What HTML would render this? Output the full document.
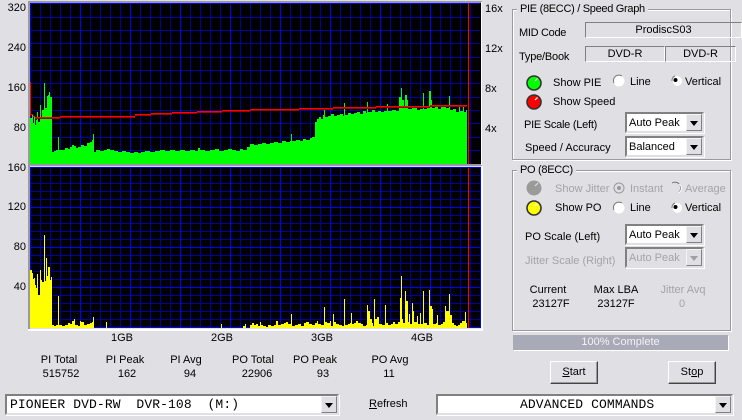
<!DOCTYPE html>
<html><head><meta charset="utf-8"><style>
html,body{margin:0;padding:0}
body{width:742px;height:420px;background:#E0DFE3;overflow:hidden;position:relative;font:11px "Liberation Sans",Arial,sans-serif;color:#000}
.t{position:absolute;white-space:nowrap;line-height:13px;height:13px;margin-top:1px}
.c{transform:translateX(-50%)}
.r{transform:translateX(-100%)}
.d{color:#a4a4a6}
.f{position:absolute;box-sizing:border-box;border:1px solid;border-color:#808080 #fff #fff #808080;text-align:center;line-height:15px}
.g{position:absolute;box-sizing:border-box;border:1px solid #9a9a9c;box-shadow:1px 1px 0 #fff,inset 1px 1px 0 #fff}
.g>span{position:absolute;left:4px;top:-7px;background:#E0DFE3;padding:0 3px;line-height:13px;white-space:nowrap;letter-spacing:-.3px}
.cb{position:absolute;box-sizing:border-box;background:#fff;border:2px solid;border-color:#808080 #E0DFE3 #E0DFE3 #808080;box-shadow:1px 1px 0 #fff;line-height:19px;padding-left:2px;white-space:nowrap}
.cb b{position:absolute;right:0;top:0;bottom:0;width:16px;box-sizing:border-box;background:#E0DFE3;border:1px solid;border-color:#f4f4f4 #808080 #808080 #f4f4f4}
.cb b:after{content:"";position:absolute;left:3px;top:6px;border:4px solid transparent;border-top:5px solid #000;border-bottom:0}
.dis{background:#E0DFE3;color:#a4a4a6}
.dis b:after{border-top-color:#a0a0a0}
.m{font:13px "Liberation Mono",monospace;padding-left:3px;line-height:17px;white-space:pre;letter-spacing:.1px}
.btn{position:absolute;box-sizing:border-box;width:48px;height:23px;background:#E0DFE3;border:1px solid;border-color:#fff #444 #444 #fff;box-shadow:inset -1px -1px 0 #9a9a9c;text-align:center;line-height:20px}
u{text-decoration:underline}
svg{position:absolute;left:0;top:0}
</style></head><body>
<svg width="742" height="420" viewBox="0 0 742 420" shape-rendering="crispEdges">
<rect x="30" y="2" width="451" height="162" fill="#000"/>
<rect x="30" y="167" width="451" height="161" fill="#000"/>
<path fill="none" stroke="#00009c" d="M40.5 3V164M50.5 3V164M60.5 3V164M70.5 3V164M90.5 3V164M100.5 3V164M110.5 3V164M120.5 3V164M140.5 3V164M150.5 3V164M160.5 3V164M170.5 3V164M190.5 3V164M200.5 3V164M210.5 3V164M220.5 3V164M240.5 3V164M250.5 3V164M260.5 3V164M270.5 3V164M290.5 3V164M300.5 3V164M310.5 3V164M320.5 3V164M340.5 3V164M350.5 3V164M360.5 3V164M370.5 3V164M390.5 3V164M400.5 3V164M410.5 3V164M420.5 3V164M440.5 3V164M450.5 3V164M460.5 3V164M470.5 3V164
M30 17.5H480M30 30.5H480M30 43.5H480M30 57.5H480M30 70.5H480M30 83.5H480M30 97.5H480M30 110.5H480M30 123.5H480M30 137.5H480M30 150.5H480
M40.5 167V328M50.5 167V328M60.5 167V328M70.5 167V328M90.5 167V328M100.5 167V328M110.5 167V328M120.5 167V328M140.5 167V328M150.5 167V328M160.5 167V328M170.5 167V328M190.5 167V328M200.5 167V328M210.5 167V328M220.5 167V328M240.5 167V328M250.5 167V328M260.5 167V328M270.5 167V328M290.5 167V328M300.5 167V328M310.5 167V328M320.5 167V328M340.5 167V328M350.5 167V328M360.5 167V328M370.5 167V328M390.5 167V328M400.5 167V328M410.5 167V328M420.5 167V328M440.5 167V328M450.5 167V328M460.5 167V328M470.5 167V328
M30 175.5H480M30 183.5H480M30 191.5H480M30 199.5H480M30 215.5H480M30 223.5H480M30 231.5H480M30 239.5H480M30 255.5H480M30 263.5H480M30 271.5H480M30 279.5H480M30 295.5H480M30 303.5H480M30 311.5H480M30 319.5H480"/>
<path fill="none" stroke="#0000ff" d="M30.5 3V164M80.5 3V164M130.5 3V164M180.5 3V164M230.5 3V164M280.5 3V164M330.5 3V164M380.5 3V164M430.5 3V164M30 3.5H480
M30.5 167V328M80.5 167V328M130.5 167V328M180.5 167V328M230.5 167V328M280.5 167V328M330.5 167V328M380.5 167V328M430.5 167V328M480.5 167V328M30 167.5H480M30 207.5H480M30 247.5H480M30 287.5H480M30 327.5H480"/>
<path fill="#00ff00" d="M30 164V118H32V115H33V123H34V116H35V125H36V120H37V112H38V122H40V105H41V118H42V110H44V83H45V108H47V96H48V95H49V92H50V97H52V152H54V151H56V150H58V137H59V150H62V150H65V148H68V149H70V147H72V145H74V146H76V148H78V147H81V145H84V146H87V143H90V142H92V140H93V134H94V152H96V150H100V151H104V150H107V149H110V150H114V151H118V152H122V151H126V152H130V153H134V152H138V153H141V152H145V151H150V152H155V151H160V150H165V151H170V150H175V151H180V150H185V151H190V150H195V151H198V148H200V150H205V151H210V150H215V149H219V151H224V150H228V149H232V150H236V151H240V149H243V150H247V147H250V144H254V145H258V144H262V143H266V144H270V143H274V142H278V143H282V141H286V142H290V141H291V134H292V141H296V140H300V141H303V139H306V140H310V138H312V137H315V122H317V119H319V117H321V119H323V115H324V109H325V117H328V116H331V114H334V116H337V115H340V114H343V116H344V103H345V115H348V113H351V114H354V113H357V112H360V114H363V111H366V113H367V102H368V112H372V110H375V112H378V111H381V112H384V111H387V104H388V111H392V110H396V111H399V97H401V88H402V100H404V107H405V95H407V100H408V109H412V108H414V107H417V110H420V109H423V93H424V109H427V107H429V91H431V100H432V108H435V106H437V105H438V109H441V107H444V105H446V108H449V96H450V110H453V109H456V112H459V105H460V111H463V106H464V112H466V110H467V164Z"/>
<path fill="#ffff00" d="M30 328V270H32V273H33V279H34V278H35V285H36V288H37V274H38V295H40V270H41V280H42V282H44V235H45V281H46V258H47V276H48V267H50V280H51V277H52V325H54V326H56V325H58V296H59V325H62V326H65V325H68V323H70V324H72V321H74V319H75V325H78V326H80V321H81V322H84V325H87V324H90V323H92V322H93V317H94V328ZM106 328V322H107V328ZM221 328V324H222V328ZM243 328V326H245V324H246V328ZM250 328V325H252V323H254V325H256V324H258V326H260V322H261V325H263V326H266V327H268V325H271V326H274V325H276V321H278V325H281V324H284V323H286V322H288V324H291V314H292V326H295V325H298V324H301V326H304V323H306V322H309V324H312V325H315V323H317V321H318V324H321V325H324V307H325V322H327V323H330V321H331V326H333V314H334V322H336V324H339V325H342V326H344V299H345V325H348V324H350V323H351V313H352V324H354V323H356V321H358V323H361V324H363V326H366V325H367V305H368V311H370V319H372V323H373V326H374V299H375V319H377V317H379V324H382V325H385V305H386V323H388V325H391V324H393V322H395V324H398V322H400V298H401V276H402V319H403V323H405V291H406V301H408V322H409V314H410V324H412V303H413V311H414V322H417V316H418V324H420V313H421V324H423V291H424V323H427V325H429V290H430V306H432V309H433V324H436V323H437V315H438V325H441V324H443V322H445V306H446V311H449V294H450V315H452V323H454V325H456V326H458V325H460V323H462V321H465V312H466V323H467V328Z"/>
<path fill="none" stroke="#a00000" d="M35 118.500H60M60 117.500H135M135 115.500H151M151 114.500H172M172 113.500H197M197 112.500H222M222 111.500H250M250 110.500H299M299 109.500H333M333 108.500H376M376 107.500H430M430 106.500H467"/>
<path fill="none" stroke="#ff0000" d="M30.5 82V116M31 114.500H33M33 116.500H35M35 117.500H60M60 116.500H135M135 114.500H151M151 113.500H172M172 112.500H197M197 111.500H222M222 110.500H250M250 109.500H299M299 108.500H333M333 107.500H376M376 106.500H430M430 105.500H467"/>
<rect x="468" y="3" width="1" height="161" fill="#ff0000"/>
<rect x="468" y="168" width="1" height="160" fill="#ff0000"/>
<rect x="28" y="1" width="454" height="2" fill="#9a9a9c"/>
<rect x="28" y="1" width="2" height="163" fill="#9a9a9c"/>
<rect x="28" y="164" width="454" height="2" fill="#9a9a9c"/>
<rect x="28" y="166" width="2" height="163" fill="#9a9a9c"/>
<rect x="481" y="2" width="1" height="163" fill="#fff"/>
<rect x="481" y="166" width="2" height="165" fill="#fff"/>
<rect x="28" y="329" width="455" height="2" fill="#fff"/>
<g shape-rendering="geometricPrecision">
<circle cx="534" cy="83" r="7" fill="#00ff00" stroke="#333" stroke-width="1.6"/><path d="M535 81l2.500-2.500" stroke="#fff" stroke-width="1.200"/>
<circle cx="534" cy="102" r="7" fill="#ff0000" stroke="#333" stroke-width="1.6"/><path d="M535 100l2.500-2.500" stroke="#fff" stroke-width="1.200"/>
<circle cx="534" cy="188" r="7.5" fill="#9a9a9a"/><path d="M535 186l3-3" stroke="#ddd" stroke-width="1.2"/>
<circle cx="534" cy="208" r="7" fill="#ffff00" stroke="#333" stroke-width="1.6"/><path d="M535 206l2.500-2.500" stroke="#fff" stroke-width="1.200"/>
<circle cx="619" cy="81" r="5.5" fill="#fff"/><path d="M614 83a5.5 5.5 0 0 1 8-7" fill="none" stroke="#777"/>
<circle cx="677" cy="81" r="5" fill="#fff"/><path d="M672 81a5 5 0 0 1 3-5" fill="none" stroke="#777"/><path d="M672 81a5 5 0 0 0 3 5" fill="none" stroke="#E0DFE3" stroke-width="2"/><circle cx="675.5" cy="80" r="2" fill="#000"/>
<circle cx="619" cy="188" r="5" fill="#E0DFE3" stroke="#999"/><circle cx="619" cy="188" r="2" fill="#999"/>
<path d="M672 183a5 5 0 0 1 6 10" fill="none" stroke="#777"/><path d="M679 184a5 5 0 0 1 -1 9" fill="none" stroke="#fff"/>
<circle cx="619" cy="208" r="5.5" fill="#fff"/><path d="M614 210a5.5 5.5 0 0 1 8-7" fill="none" stroke="#777"/>
<circle cx="677" cy="208" r="5" fill="#fff"/><path d="M672 208a5 5 0 0 1 3-5" fill="none" stroke="#777"/><path d="M672 208a5 5 0 0 0 3 5" fill="none" stroke="#E0DFE3" stroke-width="2"/><circle cx="675.5" cy="207" r="2" fill="#000"/>
</g>
</svg>

<div class="t r" style="left:26px;top:1px">320</div>
<div class="t r" style="left:26px;top:41px">240</div>
<div class="t r" style="left:26px;top:81px">160</div>
<div class="t r" style="left:26px;top:121px">80</div>
<div class="t r" style="left:26px;top:161px">160</div>
<div class="t r" style="left:26px;top:200px">120</div>
<div class="t r" style="left:26px;top:240px">80</div>
<div class="t r" style="left:26px;top:280px">40</div>
<div class="t" style="left:485px;top:2px">16x</div>
<div class="t" style="left:485px;top:42px">12x</div>
<div class="t" style="left:485px;top:82px">8x</div>
<div class="t" style="left:485px;top:122px">4x</div>
<div class="t c" style="left:122px;top:331px">1GB</div>
<div class="t c" style="left:222px;top:331px">2GB</div>
<div class="t c" style="left:322px;top:331px">3GB</div>
<div class="t c" style="left:422px;top:331px">4GB</div>
<div class="t c" style="left:59px;top:353px">PI Total</div>
<div class="t c" style="left:61px;top:367px">515752</div>
<div class="t c" style="left:125px;top:353px">PI Peak</div>
<div class="t c" style="left:127px;top:367px">162</div>
<div class="t c" style="left:186px;top:353px">PI Avg</div>
<div class="t c" style="left:190px;top:367px">94</div>
<div class="t c" style="left:253px;top:353px">PO Total</div>
<div class="t c" style="left:257px;top:367px">22906</div>
<div class="t c" style="left:315px;top:353px">PO Peak</div>
<div class="t c" style="left:323px;top:367px">93</div>
<div class="t c" style="left:390px;top:353px">PO Avg</div>
<div class="t c" style="left:389px;top:367px">11</div>

<div class="g" style="left:512px;top:9px;width:219px;height:151px"><span>PIE (8ECC) / Speed Graph</span></div>
<div class="t" style="left:519px;top:26px;letter-spacing:-.3px">MID Code</div>
<div class="f" style="left:585px;top:22px;width:157px;height:16px">ProdiscS03</div>
<div class="t" style="left:519px;top:50px;letter-spacing:-.2px">Type/Book</div>
<div class="f" style="left:585px;top:46px;width:80px;height:16px">DVD-R</div>
<div class="f" style="left:665px;top:46px;width:71px;height:16px">DVD-R</div>
<div class="t" style="left:553px;top:76px">Show PIE</div>
<div class="t" style="left:630px;top:75px">Line</div>
<div class="t" style="left:685px;top:75px">Vertical</div>
<div class="t" style="left:553px;top:95px">Show Speed</div>
<div class="t" style="left:524px;top:118px;letter-spacing:-.25px">PIE Scale (Left)</div>
<div class="cb" style="left:625px;top:112px;width:79px;height:21px">Auto Peak<b></b></div>
<div class="t" style="left:525px;top:141px">Speed / Accuracy</div>
<div class="cb" style="left:625px;top:136px;width:79px;height:21px">Balanced<b></b></div>

<div class="g" style="left:512px;top:170px;width:219px;height:161px"><span>PO (8ECC)</span></div>
<div class="t d" style="left:555px;top:182px">Show Jitter</div>
<div class="t d" style="left:630px;top:182px">Instant</div>
<div class="t d" style="left:685px;top:182px">Average</div>
<div class="t" style="left:555px;top:201px">Show PO</div>
<div class="t" style="left:630px;top:201px">Line</div>
<div class="t" style="left:685px;top:201px">Vertical</div>
<div class="t" style="left:525px;top:230px">PO Scale (Left)</div>
<div class="cb" style="left:625px;top:224px;width:79px;height:21px">Auto Peak<b></b></div>
<div class="t d" style="left:525px;top:254px">Jitter Scale (Right)</div>
<div class="cb dis" style="left:625px;top:247px;width:79px;height:21px">Auto Peak<b></b></div>
<div class="t c" style="left:548px;top:283px">Current</div>
<div class="t c" style="left:551px;top:297px">23127F</div>
<div class="t c" style="left:616px;top:283px">Max LBA</div>
<div class="t c" style="left:616px;top:297px">23127F</div>
<div class="t c d" style="left:683px;top:283px">Jitter Avq</div>
<div class="t c d" style="left:682px;top:297px">0</div>

<div style="position:absolute;left:513px;top:335px;width:215px;height:15px;background:#A8AAB8;box-shadow:1px 1px 0 #fff;color:#f2f2f4;text-align:center;line-height:15px">100% Complete</div>
<div class="btn" style="left:550px;top:361px"><u>S</u>tart</div>
<div class="btn" style="left:668px;top:361px">St<u>o</u>p</div>

<div class="cb m" style="left:5px;top:394px;width:334px;height:21px">PIONEER DVD-RW  DVR-108  (M:)<b></b></div>
<div class="t" style="left:369px;top:397px"><u>R</u>efresh</div>
<div class="cb m" style="left:436px;top:394px;width:297px;height:21px;padding-left:82px">ADVANCED COMMANDS<b></b></div>
</body></html>
